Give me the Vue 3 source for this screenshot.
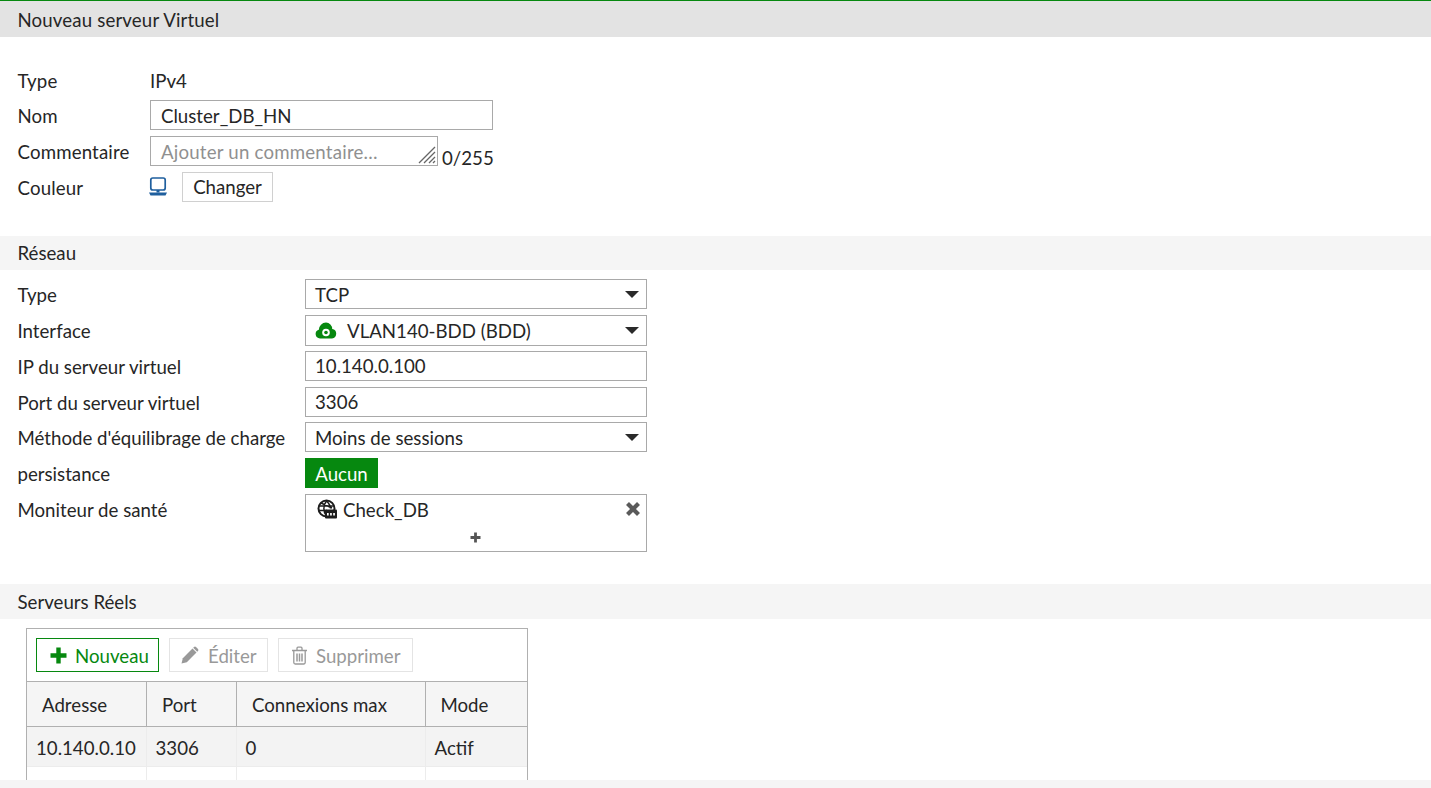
<script setup>
const rows = [
  { a: '10.140.0.10', p: '3306', c: '0', m: 'Actif', cls: 'filled' },
  { a: '', p: '', c: '', m: '', cls: '' },
]
</script>

<template>
  <div class="page">
    <div class="scroll">
      <h1 class="title">Nouveau serveur Virtuel</h1>

      <section class="general">
        <div class="row textrow"><label class="lab1">Type</label><span>IPv4</span></div>
        <div class="row"><label class="lab1">Nom</label><div class="field w343">Cluster_DB_HN</div></div>
        <div class="row">
          <label class="lab1">Commentaire</label>
          <div class="field w288 placeholder">
            Ajouter un commentaire…
            <svg class="grip" width="18" height="18" viewBox="0 0 18 18">
              <path d="M1 17 17 1M6 17 17 6M11 17 17 11M15 17l2-2" stroke="#666" stroke-width="1.300" fill="none" />
            </svg>
          </div>
          <span class="count">0/255</span>
        </div>
        <div class="row">
          <label class="lab1">Couleur</label>
          <svg class="monitor" width="18" height="19" viewBox="0 0 18 19">
            <rect x="1.800" y="1" width="14.400" height="12" rx="2" fill="#fff" stroke="#1f5f9e" stroke-width="1.700" />
            <path d="M7.500 13h3v2.500h-3z" fill="#1f5f9e" />
            <path d="M0 15.500h18L16.500 18.500h-15z" fill="#1f5f9e" />
          </svg>
          <button class="plain">Changer</button>
        </div>
      </section>

      <h2 class="bar">Réseau</h2>
      <section class="network">
        <div class="row"><label class="lab2">Type</label>
          <div class="field w342 select">TCP<i class="caret"></i></div></div>
        <div class="row"><label class="lab2">Interface</label>
          <div class="field w342 select h31">
            <svg class="cloud" width="22" height="17" viewBox="0 0 22 17">
              <path d="M5 16.500A4.500 4.500 0 0 1 3.800 7.700 7.500 7.500 0 0 1 11 .5a6.500 6.500 0 0 1 6.200 6.500A4.800 4.800 0 0 1 17 16.500z" fill="#06880f" />
              <circle cx="11" cy="10.500" r="3.800" fill="#fff" />
              <circle cx="11" cy="10.500" r="1.800" fill="#06880f" />
            </svg>
            VLAN140-BDD (BDD)<i class="caret"></i>
          </div></div>
        <div class="row"><label class="lab2">IP du serveur virtuel</label><div class="field w342">10.140.0.100</div></div>
        <div class="row"><label class="lab2">Port du serveur virtuel</label><div class="field w342">3306</div></div>
        <div class="row"><label class="lab2">Méthode d'équilibrage de charge</label>
          <div class="field w342 select">Moins de sessions<i class="caret"></i></div></div>
        <div class="row"><label class="lab2">persistance</label><button class="toggle">Aucun</button></div>
        <div class="row top">
          <label class="lab2">Moniteur de santé</label>
          <div class="multi">
            <div class="entry">
              <svg width="20" height="20" viewBox="0 0 20 20" class="globe">
                <circle cx="9.500" cy="9.500" r="8" fill="#fff" stroke="#1c1c1c" stroke-width="2" />
                <path d="M2 7h15M2 11.500h8M9.500 2c-3.500 4-3.500 11 0 15M9.500 2c3 3 4 5 4 7.500M4 4l11 5" stroke="#1c1c1c" stroke-width="1.500" fill="none" />
                <rect x="8" y="10.500" width="12" height="9" rx="1" fill="#1c1c1c" />
                <path d="M10 14h1.700v2.500H10zM13.100 14h1.700v2.500h-1.700zM16.200 14h1.700v2.500h-1.700z" fill="#fff" />
              </svg>
              <span>Check_DB</span>
              <svg class="close" width="16" height="16" viewBox="0 0 16 16">
                <path d="M2.500 2.500 13.500 13.500M13.500 2.500 2.500 13.500" stroke="#5a5a5a" stroke-width="4.200" />
              </svg>
            </div>
            <svg class="plus" width="11" height="11" viewBox="0 0 11 11">
              <path d="M5.500 0.500v10M0.500 5.500h10" stroke="#555" stroke-width="2.800" />
            </svg>
          </div>
        </div>
      </section>

      <h2 class="bar third">Serveurs Réels</h2>
      <div class="tablebox">
        <div class="toolbar">
          <button class="tool primary">
            <svg width="17" height="17" viewBox="0 0 17 17"><path d="M8.500 .5v16M.5 8.500h16" stroke="#06880f" stroke-width="4.400" /></svg>
            <span>Nouveau</span>
          </button>
          <button class="tool disabled edit">
            <svg width="18" height="18" viewBox="0 0 18 18">
              <path d="M0.500 17.500l1.300-5.300L11.500 2.500l4 4-9.700 9.700z" fill="#999" />
              <path d="M13 1a1.500 1.500 0 0 1 2 0l2 2a1.500 1.500 0 0 1 0 2l-.8.800-4-4z" fill="#999" />
            </svg>
            <span>Éditer</span>
          </button>
          <button class="tool disabled del">
            <svg width="17" height="19" viewBox="0 0 17 19" fill="none" stroke="#999" stroke-width="1.300">
              <path d="M1 4.500h15M6 4.500V2.200a1 1 0 0 1 1-1h3a1 1 0 0 1 1 1v2.300" />
              <path d="M2.800 4.500v12a1.500 1.500 0 0 0 1.500 1.500h8.400a1.500 1.500 0 0 0 1.500-1.500v-12" />
              <path d="M6 7.500v8M8.500 7.500v8M11 7.500v8" stroke-width="1.500" />
            </svg>
            <span>Supprimer</span>
          </button>
        </div>
        <table>
          <colgroup><col class="c1" /><col class="c2" /><col class="c3" /><col class="c4" /></colgroup>
          <thead>
            <tr><th>Adresse</th><th>Port</th><th>Connexions max</th><th>Mode</th></tr>
          </thead>
          <tbody>
            <tr v-for="(r, i) in rows" :key="i" :class="r.cls">
              <td>{{ r.a }}</td><td>{{ r.p }}</td><td>{{ r.c }}</td><td>{{ r.m }}</td>
            </tr>
          </tbody>
        </table>
      </div>
    </div>
    <div class="footer"></div>
  </div>
</template>

<style>
html, body { margin: 0; height: 100%; overflow: hidden; background: #fff; }
</style>

<style scoped>
.page {
  height: 788px;
  display: flex;
  flex-direction: column;
  font-family: Lato, "Liberation Sans", sans-serif;
  font-size: 14pt;
  line-height: 22px;
  color: #262626;
  border-top: 1px solid #06880f;
  box-sizing: border-box;
}
.scroll { flex: 1; min-height: 0; overflow: hidden; }
.footer { height: 8px; background: #f5f5f5; flex: none; }
.title {
  margin: 0;
  height: 36px;
  padding-left: 17.500px;
  background: #e3e3e3;
  font-size: 14pt;
  font-weight: 400;
  line-height: 39px;
  letter-spacing: .14px;
}
.bar {
  margin: 0;
  height: 34px;
  padding-left: 17.500px;
  background: #f5f5f5;
  font-size: 14pt;
  font-weight: 400;
  line-height: 35px;
}
.third { height: 35px; line-height: 37px; }
.row {
  display: flex;
  align-items: center;
  padding-left: 17.500px;
  height: 30px;
}
.top { align-items: flex-start; height: 58px; }
.general { padding-top: 27px; height: 199px; box-sizing: border-box; display: flex; flex-direction: column; gap: 6px; }
.general .row > label, .textrow span, .field { padding-top: 1px; }
.textrow { padding-top: 3px; box-sizing: border-box; }
.lab1 { width: 132.500px; flex: none; letter-spacing: .15px; }
.lab2 { width: 287.500px; flex: none; white-space: nowrap; padding-top: 2px; }
.top .lab2 { padding-top: 5px; }
.network { padding-top: 9px; height: 314px; box-sizing: border-box; display: flex; flex-direction: column; gap: 5.850px; }
.field {
  position: relative;
  display: flex;
  align-items: center;
  box-sizing: border-box;
  height: 30px;
  padding-left: 10px;
  border: 1px solid #a9a9a9;
  background: #fff;
  flex: none;
}
.w343 { width: 343px; }
.w342 { width: 342px; padding-left: 9px; }
.w288 { width: 288px; }
.h31 { height: 31px; align-self: flex-start; }
.placeholder { color: #909090; letter-spacing: .2px; }
.grip { position: absolute; right: 1px; bottom: 1px; }
.count { align-self: flex-end; margin-left: 4px; line-height: 22px; margin-bottom: -3px; }
.monitor { flex: none; margin: -2px 15px 0 -1px; }
.plain {
  height: 30px;
  width: 91px;
  padding: 0;
  border: 1px solid #d0d0d0;
  background: #fff;
  font: inherit;
  color: inherit;
}
.select { padding-right: 28px; }
.caret {
  position: absolute;
  right: 7px;
  top: 50%;
  margin-top: -3px;
  width: 0;
  height: 0;
  border-left: 7px solid transparent;
  border-right: 7px solid transparent;
  border-top: 7px solid #2a2a2a;
}
.cloud { margin-right: 10px; flex: none; }
.toggle {
  height: 30px;
  width: 73px;
  padding: 2px 0 0;
  border: 0;
  background: #06880f;
  color: #fff;
  font: inherit;
}
.multi {
  box-sizing: border-box;
  width: 342px;
  height: 58px;
  border: 1px solid #a9a9a9;
  position: relative;
}
.entry {
  display: flex;
  align-items: center;
  height: 30px;
  padding: 0 5px 0 11px;
}
.entry span { margin-left: 6px; flex: 1; }
.globe { flex: none; margin-top: -2px; }
.close { flex: none; margin-top: -2px; }
.plus { display: block; margin: 7px 0 0 164px; }
.tablebox {
  margin: 9px 0 0 26px;
  width: 502px;
  box-sizing: border-box;
  border: 1px solid #b0b0b0;
}
.toolbar {
  display: flex;
  gap: 10px;
  height: 52px;
  padding: 9px 0 0 9px;
  box-sizing: border-box;
  align-items: flex-start;
}
.tool {
  display: flex;
  align-items: center;
  gap: 8px;
  box-sizing: border-box;
  height: 34px;
  padding: 0 0 0 13px;
  background: #fff;
  font: inherit;
}
.tool span { padding-top: 2px; }
.primary { width: 123px; border: 1px solid #06880f; color: #06880f; }
.disabled { border: 1px solid #e4e4e4; color: #999; }
.edit { width: 99px; padding-left: 11px; gap: 9px; }
.del { width: 135px; padding-left: 12px; }
table {
  width: 500px;
  border-collapse: collapse;
  table-layout: fixed;
}
.c1 { width: 119px; }
.c2 { width: 90px; }
.c3 { width: 189px; }
th {
  height: 45px;
  padding: 2px 0 0 15px;
  box-sizing: border-box;
  background: #f5f5f5;
  border: 1px solid #b0b0b0;
  font-weight: 400;
  text-align: left;
}
th:nth-child(2), th:nth-child(3) { padding-left: 15.500px; }
th:first-child, td:first-child { border-left: 0; }
th:last-child, td:last-child { border-right: 0; }
td {
  height: 40px;
  padding: 2px 0 0 9px;
  box-sizing: border-box;
  border: 1px solid #ececec;
  border-top: 0;
}
.filled td { background: #f3f3f3; }
</style>
